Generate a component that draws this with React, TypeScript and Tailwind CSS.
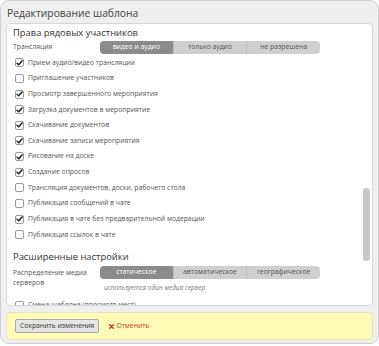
import React from "react";

const F = { fontFamily: '"Open Sans", "DejaVu Sans", sans-serif' };

function Check({ on }: { on: boolean }) {
  return (
    <span className="w-[9px] h-[9px] rounded-[2px] border border-[#9a9a9a] bg-white flex items-center justify-center shrink-0">
      {on && (
        <svg width="8" height="8" viewBox="0 0 8 8">
          <path d="M1.2 4.2 L3.1 6.1 L6.9 1.6" fill="none" stroke="#222" strokeWidth="1.7" strokeLinecap="round" strokeLinejoin="round" />
        </svg>
      )}
    </span>
  );
}

function Seg({ items, active }: { items: string[]; active: number }) {
  return (
    <div className="flex w-[220px] h-[13px] rounded-[4px] overflow-hidden text-[6.8px] leading-none">
      {items.map((t, i) => (
        <div
          key={t}
          className={
            "flex-1 flex items-center justify-center " +
            (i === active ? "bg-[#8b8b8b] text-white" : "bg-[#cfcfcf] text-[#555] ") +
            (i > 0 ? " border-l border-[#bdbdbd]" : "")
          }
        >
          {t}
        </div>
      ))}
    </div>
  );
}

const rows: [string, boolean][] = [
  ["Прием аудио/видео трансляции", true],
  ["Приглашение участников", false],
  ["Просмотр завершенного мероприятия", true],
  ["Загрузка документов в мероприятие", true],
  ["Скачивание документов", true],
  ["Скачивание записи мероприятия", true],
  ["Рисование на доске", true],
  ["Создание опросов", true],
  ["Трансляция документов, доски, рабочего стола", false],
  ["Публикация сообщений в чате", false],
  ["Публикация в чате без предварительной модерации", true],
  ["Публикация ссылок в чате", false],
];

export default function App() {
  return (
    <div className="w-[379px] h-[346px] bg-white" style={F}>
      <div className="w-[379px] h-[344px] rounded-[9px] border border-[#cfcfcf] bg-[#efefef] flex flex-col">
        <div className="h-[22px] pl-[6px] flex items-center text-[10.3px] text-[#444] leading-none pt-[2px]">
          Редактирование шаблона
        </div>
        <div className="mx-[5px] h-[283px] bg-white border border-[#d6d6d6] rounded-[4px] relative overflow-hidden">
          <div className="pl-[6px] pt-[2px] flex flex-col">
            <div className="h-[14px] flex items-center text-[9.4px] text-[#333] leading-none">
              Права рядовых участников
            </div>
            <div className="h-[13px] mt-[1px] flex items-center">
              <div className="w-[87px] text-[6.8px] text-[#555]">Трансляция</div>
              <Seg items={["видео и аудио", "только аудио", "не разрешена"]} active={0} />
            </div>
            <div className="flex flex-col mt-[1px]">
              {rows.map(([t, on]) => (
                <div key={t} className="h-[15.64px] flex items-center gap-[4px] pl-[2px] text-[6.8px] text-[#555] whitespace-nowrap">
                  <Check on={on} />
                  <span>{t}</span>
                </div>
              ))}
            </div>
            <div className="h-[14px] mt-[7px] flex items-center text-[9.4px] text-[#333] leading-none">
              Расширенные настройки
            </div>
            <div className="flex mt-[2px]">
              <div className="w-[87px] text-[6.8px] text-[#555] leading-[10px] pt-[2px]">
                Распределение медиа
                <br />
                серверов
              </div>
              <div className="flex flex-col items-start">
                <Seg items={["статическое", "автоматическое", "географическое"]} active={0} />
                <div className="text-[6.5px] italic text-[#777] mt-[4px] pl-[4px] leading-[10px]">
                  используется один медиа сервер
                </div>
              </div>
            </div>
            <div className="h-[15px] mt-[5px] flex items-center gap-[4px] pl-[2px] text-[6.8px] text-[#555] whitespace-nowrap">
              <Check on={false} />
              <span>Смена шаблона (просмотр мест)</span>
            </div>
          </div>
          <div className="absolute right-[2px] top-[164px] w-[7px] h-[73px] rounded-[3px] bg-[#c8c8c8]" />
        </div>
        <div className="mx-[5px] mt-[6px] h-[28px] rounded-[4px] bg-[#fcfcb6] border border-[#e2e2c0] flex items-center pl-[8px] gap-[10px]">
          <button className="h-[14px] px-[4px] rounded-[2px] border border-[#a8a8a8] bg-[#e6e6e6] text-[6.8px] text-[#333] leading-none">
            Сохранить изменения
          </button>
          <span className="text-[6.8px] text-[#d03020] flex items-center gap-[2px]">
            <svg width="5" height="5" viewBox="0 0 5 5">
              <path d="M0.7 0.7 L4.3 4.3 M4.3 0.7 L0.7 4.3" stroke="#d03020" strokeWidth="1.3" strokeLinecap="round" />
            </svg>
            Отменить
          </span>
        </div>
      </div>
    </div>
  );
}
